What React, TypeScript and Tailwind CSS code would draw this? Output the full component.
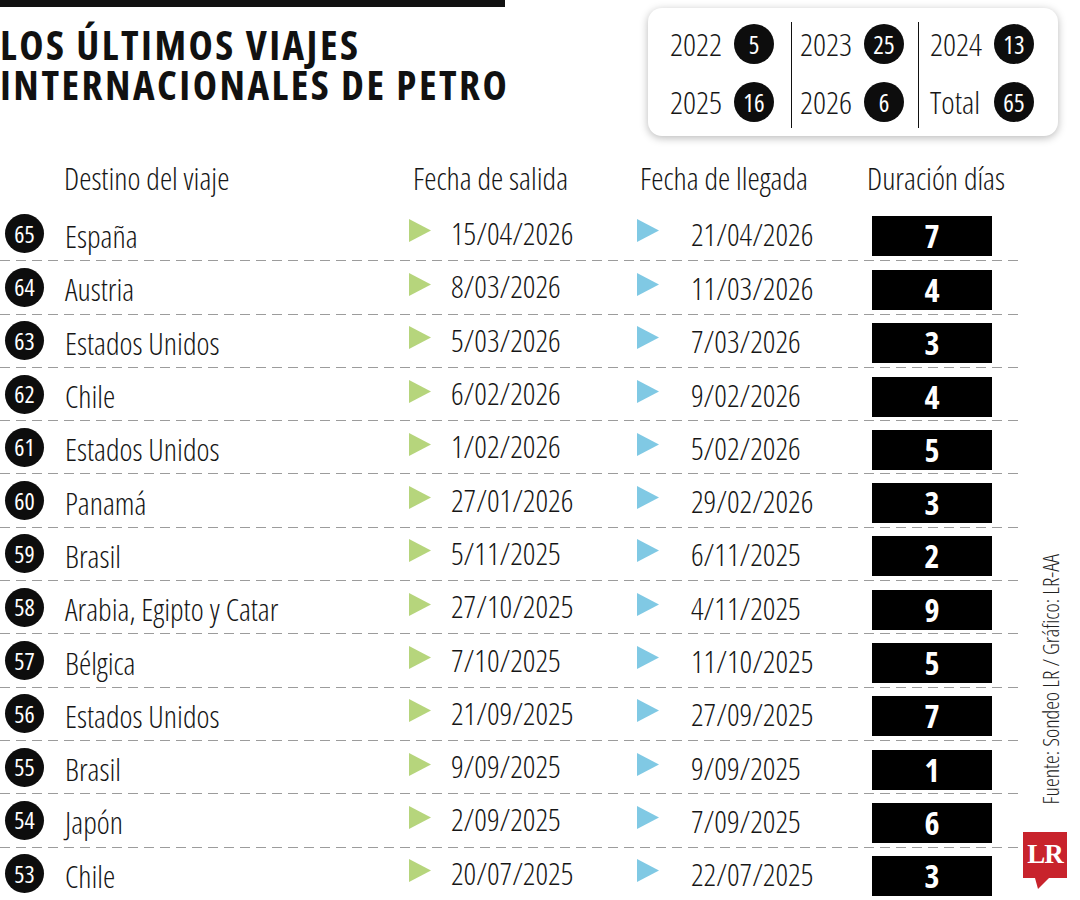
import React from "react";

type Trip = { n: number; dest: string; out: string; back: string; days: number };

const trips: Trip[] = [
  { n: 65, dest: "España", out: "15/04/2026", back: "21/04/2026", days: 7 },
  { n: 64, dest: "Austria", out: "8/03/2026", back: "11/03/2026", days: 4 },
  { n: 63, dest: "Estados Unidos", out: "5/03/2026", back: "7/03/2026", days: 3 },
  { n: 62, dest: "Chile", out: "6/02/2026", back: "9/02/2026", days: 4 },
  { n: 61, dest: "Estados Unidos", out: "1/02/2026", back: "5/02/2026", days: 5 },
  { n: 60, dest: "Panamá", out: "27/01/2026", back: "29/02/2026", days: 3 },
  { n: 59, dest: "Brasil", out: "5/11/2025", back: "6/11/2025", days: 2 },
  { n: 58, dest: "Arabia, Egipto y Catar", out: "27/10/2025", back: "4/11/2025", days: 9 },
  { n: 57, dest: "Bélgica", out: "7/10/2025", back: "11/10/2025", days: 5 },
  { n: 56, dest: "Estados Unidos", out: "21/09/2025", back: "27/09/2025", days: 7 },
  { n: 55, dest: "Brasil", out: "9/09/2025", back: "9/09/2025", days: 1 },
  { n: 54, dest: "Japón", out: "2/09/2025", back: "7/09/2025", days: 6 },
  { n: 53, dest: "Chile", out: "20/07/2025", back: "22/07/2025", days: 3 },
];

const legendCols: { label: string; value: number }[][] = [
  [
    { label: "2022", value: 5 },
    { label: "2025", value: 16 },
  ],
  [
    { label: "2023", value: 25 },
    { label: "2026", value: 6 },
  ],
  [
    { label: "2024", value: 13 },
    { label: "Total", value: 65 },
  ],
];

function Triangle({ color }: { color: "green" | "blue" }) {
  return (
    <svg width="22" height="23" viewBox="0 0 22 23" className="block">
      <polygon points="0,0 22,11.5 0,23" fill={color === "green" ? "#b6d57c" : "#80c9e4"} />
    </svg>
  );
}

function LegendItem({ label, value }: { label: string; value: number }) {
  return (
    <div className="flex items-center h-[58px]">
      <span className="w-[64px] text-[32px] leading-none font-light font-stretch-condensed text-[#161616]">{label}</span>
      <span className="w-[40px] h-[40px] rounded-full bg-[#0d0d0d] text-white flex items-center justify-center text-[25px] leading-none font-normal font-stretch-condensed">
        {value}
      </span>
    </div>
  );
}

function Dashed() {
  return <div className="h-px w-full bg-[image:repeating-linear-gradient(90deg,#9c9c9c_0_10px,transparent_10px_16px)]" />;
}

export default function App() {
  return (
    <div className="w-[1080px] h-[900px] bg-white overflow-hidden font-['Open_Sans',sans-serif] text-[#161616]">
      {/* Header */}
      <div className="flex h-[136px]">
        <div className="w-[505px]">
          <div className="h-[7px] bg-[#111111]" />
          <h1 className="mt-[17px] text-[41px] leading-[40px] tracking-[2.5px] font-bold font-stretch-condensed text-[#111111] whitespace-nowrap">
            LOS ÚLTIMOS VIAJES
            <br />
            INTERNACIONALES DE PETRO
          </h1>
        </div>
        <div className="ml-auto mr-[22px] mt-[8px] w-[410px] h-[128px] rounded-[14px] bg-white shadow-[0_2px_9px_rgba(0,0,0,0.28)] flex">
          <div className="w-[143px] pl-[22px] pt-[7px] flex flex-col">
            {legendCols[0].map((it) => (
              <LegendItem key={it.label} {...it} />
            ))}
          </div>
          <div className="w-px bg-[#111111] mt-[14px] mb-[8px]" />
          <div className="w-[126px] pl-[8px] pt-[7px] flex flex-col">
            {legendCols[1].map((it) => (
              <LegendItem key={it.label} {...it} />
            ))}
          </div>
          <div className="w-px bg-[#111111] mt-[14px] mb-[8px]" />
          <div className="flex-1 pl-[11px] pt-[7px] flex flex-col">
            {legendCols[2].map((it) => (
              <LegendItem key={it.label} {...it} />
            ))}
          </div>
        </div>
      </div>

      {/* Body */}
      <div className="flex">
        <div className="w-[1022px] font-light font-stretch-condensed">
          <div className="h-[71px] pt-[14px] grid grid-cols-[64px_345px_42px_186px_54px_181px_120px] items-center text-[31px] leading-none">
            <div />
            <div className="whitespace-nowrap">Destino del viaje</div>
            <div className="col-span-2 pl-[4px] whitespace-nowrap">Fecha de salida</div>
            <div className="col-span-2 pl-[3px] whitespace-nowrap">Fecha de llegada</div>
            <div className="-ml-[5px] whitespace-nowrap">Duración días</div>
          </div>
          {trips.map((t, i) => (
            <div key={t.n}>
              {i > 0 && <Dashed />}
              <div className={`${i === 0 ? "h-[53.3px]" : "h-[52.3px]"} grid grid-cols-[64px_345px_42px_186px_54px_181px_120px] items-center`}>
                <div className="pl-[5px]">
                  <div className="w-[39px] h-[39px] rounded-full bg-[#0d0d0d] text-white flex items-center justify-center text-[24px] leading-none font-normal">
                    {t.n}
                  </div>
                </div>
                <div className="text-[31px] leading-none pt-[5px] pl-[1px] whitespace-nowrap">{t.dest}</div>
                <div className="pb-[6px]">
                  <Triangle color="green" />
                </div>
                <div className="text-[31px] leading-none pb-[1px]">{t.out}</div>
                <div className="pb-[6px]">
                  <Triangle color="blue" />
                </div>
                <div className="text-[31px] leading-none pt-[2px]">{t.back}</div>
                <div className="pt-[5px]">
                  <div className="w-[120px] h-[40px] bg-black text-white flex items-center justify-center text-[32px] leading-none font-bold">
                    {t.days}
                  </div>
                </div>
              </div>
            </div>
          ))}
        </div>

        {/* Side: source + logo */}
        <div className="flex-1 flex flex-col items-start justify-end pb-[22px]">
          <div className="ml-[17px] text-[22px] leading-none font-light font-stretch-condensed text-[#222222] [writing-mode:vertical-rl] rotate-180 whitespace-nowrap">
            Fuente: Sondeo LR / Gráfico: LR-AA
          </div>
          <div className="relative mt-[27px] ml-[1px] w-[44px] h-[46px] bg-[#c8232c] flex items-center justify-center">
            <span className="font-['Liberation_Serif',serif] font-bold text-[27px] leading-none text-white tracking-[-1px]">LR</span>
            <svg width="14" height="11" viewBox="0 0 14 11" className="absolute left-[12px] top-[46px]">
              <polygon points="0,0 14,0 3,11" fill="#c8232c" />
            </svg>
          </div>
        </div>
      </div>
    </div>
  );
}
